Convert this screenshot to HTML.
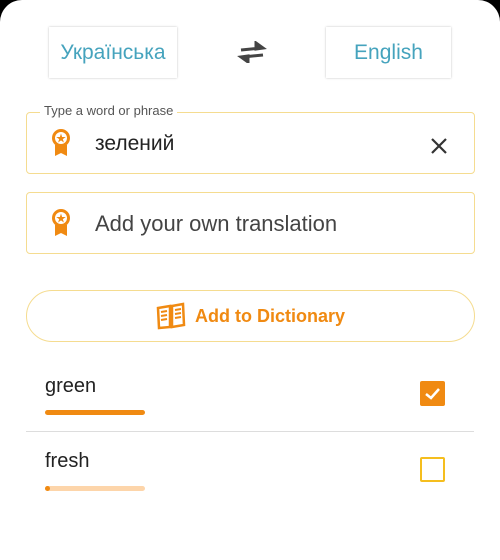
<!DOCTYPE html>
<html><head><meta charset="utf-8"><style>
body{margin:0;width:500px;height:548px;background:#000;font-family:"Liberation Sans","Noto Sans CJK SC",sans-serif;overflow:hidden}
.sheet{position:absolute;left:0;top:0;width:500px;height:560px;background:#fff;border-radius:22px 22px 0 0}
.lang{position:absolute;top:27px;height:51px;background:#fff;box-shadow:0 0 2px rgba(0,0,0,.25);color:#45a3bd;font-size:21px;display:flex;align-items:center;justify-content:center}
.field{position:absolute;left:26px;width:447px;height:60px;border:1px solid #f5dc90;border-radius:4px}
.lbl{position:absolute;left:40px;top:103px;background:#fff;padding:0 4px;font-size:13px;color:#555}
.txt{position:absolute;left:95px;font-size:21px;color:#222}
.ic{position:absolute;left:50px}
</style></head><body><div class="sheet">
<div class="lang" style="left:49px;width:128px">Українська</div>
<div class="lang" style="left:326px;width:125px">English</div>
<svg style="position:absolute;left:237px;top:41px" width="30" height="22" viewBox="0 0 30 22"><path d="M4 9L24 7M19 2L26 7L19 8Z" stroke="#444" stroke-width="3" fill="#444"/><path d="M26 14L6 16M11 21L4 16L11 15Z" stroke="#444" stroke-width="3" fill="#444"/></svg>
<div class="field" style="top:112px"></div>
<div class="lbl">Type a word or phrase</div>
<svg class="ic" style="top:128px" width="22" height="30" viewBox="0 0 22 30"><circle cx="11" cy="10" r="7.5" fill="none" stroke="#f08a12" stroke-width="3"/><path d="M5 17V28L11 25L17 28V17" fill="#f08a12"/><text x="11" y="14" font-size="10" text-anchor="middle" fill="#f08a12">★</text></svg>
<div class="txt" style="top:132px">зелений</div>
<svg style="position:absolute;left:430px;top:137px" width="18" height="18"><path d="M2 2L16 16M16 2L2 16" stroke="#333" stroke-width="2.2"/></svg>
<div class="field" style="top:192px"></div>
<svg class="ic" style="top:208px" width="22" height="30" viewBox="0 0 22 30"><circle cx="11" cy="10" r="7.5" fill="none" stroke="#f08a12" stroke-width="3"/><path d="M5 17V28L11 25L17 28V17" fill="#f08a12"/><text x="11" y="14" font-size="10" text-anchor="middle" fill="#f08a12">★</text></svg>
<div class="txt" style="top:211px;color:#444;font-size:22px">Add your own translation</div>
<div style="position:absolute;left:26px;top:290px;width:447px;height:50px;border:1px solid #f5dc90;border-radius:26px;display:flex;align-items:center;justify-content:center;color:#f08a12;font-size:18px;font-weight:bold">
<svg width="30" height="28" viewBox="0 0 30 28" style="margin-right:9px"><path d="M2 6L14 4V25L3 26Z M16 4L27 2L28 23L16 25Z" fill="none" stroke="#f08a12" stroke-width="2.5"/><path d="M5 10L11 9M5 14L11 13M5 18L11 17M19 8L25 7M19 12L25 11M19 16L25 15" stroke="#f08a12" stroke-width="2"/></svg>Add to Dictionary</div>
<div style="position:absolute;left:45px;top:375px;font-size:20px;color:#222">green</div>
<div style="position:absolute;left:45px;top:410px;width:100px;height:5px;border-radius:3px;background:#f08a12"></div>
<div style="position:absolute;left:420px;top:381px;width:25px;height:25px;border-radius:2px;background:#f08a12"><svg width="25" height="25"><path d="M6 13L11 17L19 8" stroke="#fff" stroke-width="2.5" fill="none"/></svg></div>
<div style="position:absolute;left:26px;top:431px;width:448px;height:1px;background:#ddd"></div>
<div style="position:absolute;left:45px;top:450px;font-size:20px;color:#222">fresh</div>
<div style="position:absolute;left:45px;top:486px;width:100px;height:5px;border-radius:3px;background:#fdd5aa"><div style="width:5px;height:5px;border-radius:3px;background:#f08a12"></div></div>
<div style="position:absolute;left:420px;top:457px;width:21px;height:21px;border:2.5px solid #f5be1e;border-radius:2px"></div>
</div></body></html>
